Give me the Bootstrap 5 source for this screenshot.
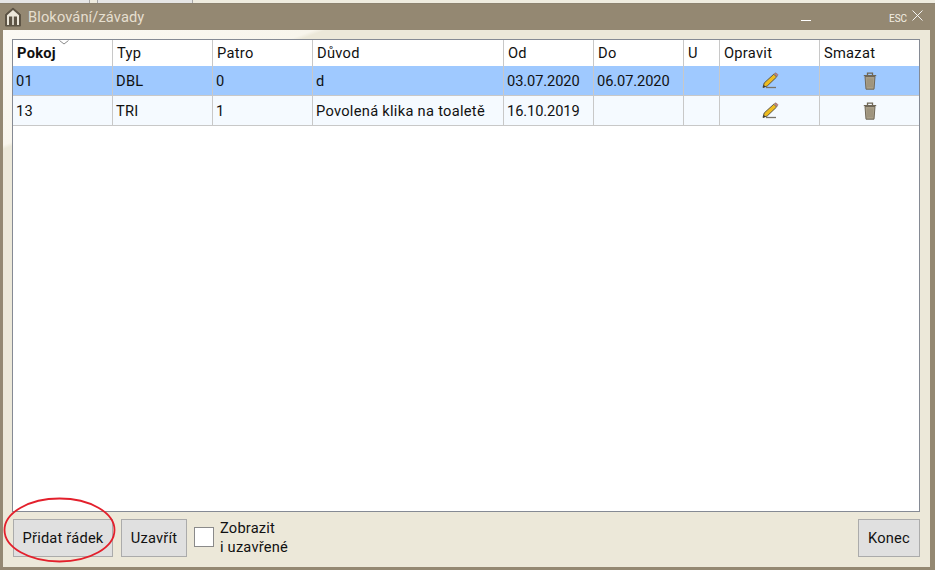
<!DOCTYPE html>
<html lang="cs"><head><meta charset="utf-8"><title>Blokování/závady</title>
<link href="https://cdn.jsdelivr.net/npm/bootstrap@5.3.0/dist/css/bootstrap.min.css" rel="stylesheet">
<style>
html,body{margin:0;height:570px;overflow:hidden;background:#efecdf;font-family:Roboto,"Liberation Sans",sans-serif;}
.win-top{height:4px;border-bottom:1px solid #8d8370;}
.st{height:3px;background:#e6e6e6;border-right:1px solid #a8a8a8;}
.st1{width:90px}.st2{width:8px;background:#efecdf}.st3{width:95px}.st4{flex:1;background:#efecdf;border-right:0}
.win{height:566px;background:#948872;padding:0 5px 3px 3px;}
.win-title{height:26px;color:#e6dfcf;font-size:14.67px;letter-spacing:.1px;}
.win-title svg{margin:0 6px 0 1px;}
.win-body{height:537px;background:linear-gradient(159.7deg,#fbf9f4 0,#f8f5ec 108px,#ece8d9 112px);padding:9px 10px 0 9px;}
.grid-box{height:473px;background:#fff;border:1px solid #858a94;}
.grid-row{display:flex;}
.hd{height:26px;background:#fff;}
.r1{height:30px;background:#9fc9ff;border-bottom:1px solid #c8c8c8;}
.r2{height:30px;background:#f5faff;border-bottom:1px solid #c8c8c8;}
.cell{border-right:1px solid #c8c8c8;font-size:14.67px;color:#111;padding-left:3px;display:flex;align-items:center;white-space:nowrap;position:relative;letter-spacing:.28px;}
.hd .cell{padding-left:4px;}
.cell:last-child{border-right:0;}
.dt{letter-spacing:-.1px;}
.c1{width:100px}.c2{width:100px}.c3{width:100px}.c4{width:191px}.c5{width:90px}.c6{width:90px}.c7{width:36px}.c8{width:100px}.c9{flex:1}
.ctr{justify-content:center;padding-left:0;}
.pen{margin-left:2px;}
.sort{position:absolute;left:46px;top:0;}
.foot{height:55px;padding:7px 0 0 1px;}
.bt{height:38px;background:#e0e0e0;border:1px solid #ababab;border-radius:0;color:#111;font-size:14.67px;padding:0;display:flex;align-items:center;justify-content:center;letter-spacing:.2px;}
.b1{width:100px}.b2{width:66px;margin-left:8px}.b3{width:62px}
.chk{width:20px;height:20px;background:#fff;border:1px solid #8a8a8a;margin:8px 6px 0 7px;}
.lbl{font-size:14.67px;line-height:19px;color:#111;letter-spacing:.2px;}
.oval{position:absolute;left:3px;top:497px;}
.min{position:absolute;left:801px;top:20px;width:10px;height:1px;background:#fff;}
.esc{position:absolute;left:889px;top:13px;font-size:10px;color:#f3efe4;line-height:12px;}
.cls{position:absolute;left:912px;top:10px;}
</style></head><body>
<div class="win-top d-flex"><div class="st st1"></div><div class="st st2"></div><div class="st st3"></div><div class="st st4"></div></div>
<div class="win d-flex flex-column">
 <div class="win-title d-flex align-items-center">
  <svg width="18" height="20" viewBox="0 0 18 20"><path d="M1.5 19V7.5L9 1 16.5 7.5V19Z" fill="#5d5445" stroke="#5d5445"/><path d="M3 18V8.2L9 3 15 8.2V18Z" fill="#ece7da"/><path d="M5 9.5h3.2V18H5zM9.8 9.5H13V18H9.8z" fill="#5d5445"/></svg>
  <span>Blokování/závady</span>
 </div>
 <div class="win-body">
  <div class="grid-box">
   <div class="grid-row hd">
    <div class="cell c1"><b>Pokoj</b><svg class="sort" width="10" height="5" viewBox="0 0 10 5"><path d="M.5.5 5 4 9.5.5" fill="none" stroke="#8a8a8a"/></svg></div>
    <div class="cell c2">Typ</div><div class="cell c3">Patro</div><div class="cell c4">Důvod</div><div class="cell c5">Od</div><div class="cell c6">Do</div><div class="cell c7">U</div><div class="cell c8">Opravit</div><div class="cell c9">Smazat</div>
   </div>
   <div class="grid-row r1">
    <div class="cell c1">01</div><div class="cell c2">DBL</div><div class="cell c3">0</div><div class="cell c4">d</div><div class="cell c5 dt">03.07.2020</div><div class="cell c6 dt">06.07.2020</div><div class="cell c7"></div>
    <div class="cell c8 ctr"><svg class="pen" width="17" height="17" viewBox="0 0 17 17"><path d="M4 15.5h10" stroke="#77736a" stroke-width="1.3"/><path d="M1 15.5 2.2 11 11.8 2.2 14.6 5 5.2 14Z" fill="#efbc1e" stroke="#5a5545" stroke-width="1"/><path d="M1 15.5 1.7 12.8 3.7 14.8Z" fill="#3a3a3a"/><path d="M12.2 1.6 14 .8 16 2.8 15 4.6Z" fill="#c77d7a" stroke="#7a6a60" stroke-width=".5"/></svg></div>
    <div class="cell c9 ctr"><svg width="14" height="18" viewBox="0 0 14 18"><path d="M.8 3.7h12.4M4.5 3.2V1.2h5v2" stroke="#6f6757" fill="none" stroke-width="1.3"/><path d="M2 4.5h10L11 17.2H3Z" fill="#a89e88" stroke="#6f6757"/><path d="M5 6.5v8.5M7 6.5v8.5M9 6.5v8.5" stroke="#8f8571" stroke-width=".7"/></svg></div>
   </div>
   <div class="grid-row r2">
    <div class="cell c1">13</div><div class="cell c2">TRI</div><div class="cell c3">1</div><div class="cell c4">Povolená klika na toaletě</div><div class="cell c5 dt">16.10.2019</div><div class="cell c6"></div><div class="cell c7"></div>
    <div class="cell c8 ctr"><svg class="pen" width="17" height="17" viewBox="0 0 17 17"><path d="M4 15.5h10" stroke="#77736a" stroke-width="1.3"/><path d="M1 15.5 2.2 11 11.8 2.2 14.6 5 5.2 14Z" fill="#efbc1e" stroke="#5a5545" stroke-width="1"/><path d="M1 15.5 1.7 12.8 3.7 14.8Z" fill="#3a3a3a"/><path d="M12.2 1.6 14 .8 16 2.8 15 4.6Z" fill="#c77d7a" stroke="#7a6a60" stroke-width=".5"/></svg></div>
    <div class="cell c9 ctr"><svg width="14" height="18" viewBox="0 0 14 18"><path d="M.8 3.7h12.4M4.5 3.2V1.2h5v2" stroke="#6f6757" fill="none" stroke-width="1.3"/><path d="M2 4.5h10L11 17.2H3Z" fill="#a89e88" stroke="#6f6757"/><path d="M5 6.5v8.5M7 6.5v8.5M9 6.5v8.5" stroke="#8f8571" stroke-width=".7"/></svg></div>
   </div>
  </div>
  <div class="foot d-flex align-items-start">
   <button class="btn bt b1">Přidat řádek</button>
   <button class="btn bt b2">Uzavřít</button>
   <div class="chk"></div>
   <div class="lbl">Zobrazit<br>i uzavřené</div>
   <button class="btn bt b3 ms-auto">Konec</button>
  </div>
 </div>
</div>
<svg class="oval" width="114" height="68" viewBox="0 0 114 68"><ellipse cx="56.5" cy="33" rx="55" ry="31.5" fill="none" stroke="#e3202c" stroke-width="1.8"/></svg>
<div class="min"></div><div class="esc">ESC</div>
<svg class="cls" width="11" height="11" viewBox="0 0 11 11"><path d="M.5.5l10 10M10.5.5l-10 10" stroke="#fff" stroke-width=".9"/></svg>
<script src="https://cdn.jsdelivr.net/npm/bootstrap@5.3.0/dist/js/bootstrap.bundle.min.js"></script>
</body></html>
